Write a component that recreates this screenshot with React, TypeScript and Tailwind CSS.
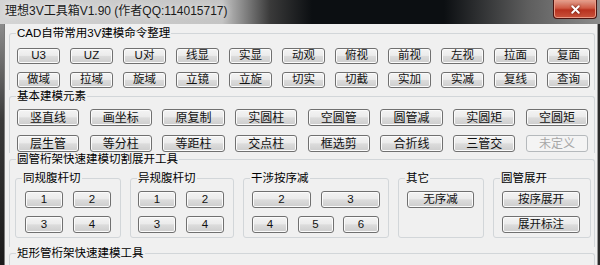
import type { ReactNode } from "react";
import { X } from "lucide-react";

type BtnProps = {
    label?: string;
    className?: string;
    disabled?: boolean;
};

function Btn({ label, className = "", disabled = false }: BtnProps) {
    return (
        <button
            className={`flex items-center justify-center rounded-[3px] border leading-none ${
                disabled
                    ? "border-[#b5b9bc] bg-[#f4f4f4] text-[#a7a7a7]"
                    : "border-[#707070] bg-[linear-gradient(#f4f4f4,#ebebeb_46%,#dcdcdc_52%,#cdcdcd)] text-[#111] shadow-[inset_0_0_0_1px_#fbfbfb]"
            } ${className}`}
        >
            {label}
        </button>
    );
}

type GroupProps = {
    title: string;
    className?: string;
    children: ReactNode;
};

function Group({ title, className = "", children }: GroupProps) {
    return (
        <fieldset className={`rounded-[3px] border border-[#d2d6d9] ${className}`}>
            <legend className="ml-[6px] px-[1px] text-[11.5px] leading-[12px] text-black">{title}</legend>
            {children}
        </fieldset>
    );
}

const cadRow1 = ["U3", "UZ", "U对", "线显", "实显", "动观", "俯视", "前视", "左视", "拉面", "复面"];
const cadRow2 = ["做域", "拉域", "旋域", "立镜", "立旋", "切实", "切截", "实加", "实减", "复线", "查询"];
const baseRow1 = ["竖直线", "画坐标", "原复制", "实圆柱", "空圆管", "圆管减", "实圆矩", "空圆矩"];
const baseRow2 = ["层生管", "等分柱", "等距柱", "交点柱", "框选剪", "合折线", "三管交"];

export default function App() {
    return (
        <div className="flex h-[265px] w-[600px] flex-col overflow-hidden bg-[#1c1c1c] font-['Liberation_Sans','Noto_Sans_CJK_SC',sans-serif]">
            {/* Title bar */}
            <div className="flex h-[24px] shrink-0 items-start justify-between bg-[linear-gradient(to_right,#d4d4d4_0%,#c4c4c4_37%,#3a3a3a_45%,#0c0f12_52%,#0c0f12_74%,#5e5e5e_88%,#8c8c8c_100%)]">
                <div className="pl-[5px] pt-[4px] text-[12px] leading-[14px] text-[#1a1a1a] [text-shadow:0_0_6px_#ffffff]">
                    理想3V工具箱V1.90 (作者QQ:114015717)
                </div>
                <div className="mr-[3px] flex h-[19px] w-[44px] items-center justify-center rounded-b-[4px] border border-t-0 border-[#4a1410] bg-[linear-gradient(#e3a391,#cf5a44_45%,#b8321f_55%,#c9533c)] shadow-[inset_0_0_0_1px_#e89a86]">
                    <X size={13} strokeWidth={3.5} className="text-white drop-shadow-[0_0_1px_#5a1a10]" />
                </div>
            </div>

            <div className="flex min-h-0 flex-1">
                {/* Left frame */}
                <div className="w-[4px] shrink-0 bg-[linear-gradient(#8c8c8c,#3a3a3a_40%,#1a1a1a)]" />

                {/* Client area */}
                <div className="flex min-w-0 flex-1 flex-col border-l border-[#7a7a7a] bg-[#f0f0f0] pr-[2px] pl-[4px]">
                    <Group title="CAD自带常用3V建模命令整理" className="mt-[3px] rounded-b-none border-b-0 pt-[9px] pb-[2px]">
                        <div className="ml-[7px] grid w-[573px] grid-cols-11 gap-x-[10px] gap-y-[8px] text-[11.5px]">
                            {cadRow1.map((t) => (
                                <Btn key={t} label={t} className="h-[16px]" />
                            ))}
                            {cadRow2.map((t) => (
                                <Btn key={t} label={t} className="h-[16px]" />
                            ))}
                        </div>
                    </Group>

                    <Group title="基本建模元素" className="rounded-b-none border-b-0 pt-[7px] pb-[1px]">
                        <div className="ml-[7px] grid w-[571px] grid-cols-8 gap-x-[10.5px] gap-y-[9px] text-[12px]">
                            {baseRow1.map((t) => (
                                <Btn key={t} label={t} className="h-[17px]" />
                            ))}
                            {baseRow2.map((t) => (
                                <Btn key={t} label={t} className="h-[17px]" />
                            ))}
                            <Btn label="未定义" disabled className="h-[17px]" />
                        </div>
                    </Group>

                    <Group title="圆管桁架快速建模切割展开工具" className="rounded-b-none border-b-0 pt-[7px] pb-[9px]">
                        <div className="ml-[5px] flex gap-[9px] text-[11.5px]">
                            <Group title="同规腹杆切" className="w-[106px] pt-[7px] pb-[4px]">
                                <div className="ml-[9px] grid grid-cols-[38px_38px] gap-x-[10px] gap-y-[8px]">
                                    <Btn label="1" className="h-[17px]" />
                                    <Btn label="2" className="h-[17px]" />
                                    <Btn label="3" className="h-[17px]" />
                                    <Btn label="4" className="h-[17px]" />
                                </div>
                            </Group>
                            <Group title="异规腹杆切" className="w-[104px] pt-[7px] pb-[4px]">
                                <div className="ml-[7px] grid grid-cols-[38px_38px] gap-x-[10px] gap-y-[8px]">
                                    <Btn label="1" className="h-[17px]" />
                                    <Btn label="2" className="h-[17px]" />
                                    <Btn label="3" className="h-[17px]" />
                                    <Btn label="4" className="h-[17px]" />
                                </div>
                            </Group>
                            <Group title="干涉按序减" className="w-[146px] pt-[7px] pb-[4px]">
                                <div className="ml-[8px] flex flex-col gap-y-[8px]">
                                    <div className="flex gap-x-[10px]">
                                        <Btn label="2" className="h-[17px] w-[59px]" />
                                        <Btn label="3" className="h-[17px] w-[59px]" />
                                    </div>
                                    <div className="flex gap-x-[9.5px]">
                                        <Btn label="4" className="h-[17px] w-[36px]" />
                                        <Btn label="5" className="h-[17px] w-[36px]" />
                                        <Btn label="6" className="h-[17px] w-[36px]" />
                                    </div>
                                </div>
                            </Group>
                            <Group title="其它" className="w-[86px] pt-[7px] pb-[4px]">
                                <div className="ml-[8px] flex flex-col gap-y-[8px]">
                                    <Btn label="无序减" className="h-[17px] w-[67px]" />
                                    <div className="h-[17px]" />
                                </div>
                            </Group>
                            <Group title="圆管展开" className="w-[98px] pt-[7px] pb-[4px]">
                                <div className="ml-[8px] flex flex-col gap-y-[8px]">
                                    <Btn label="按序展开" className="h-[17px] w-[78px]" />
                                    <Btn label="展开标注" className="h-[17px] w-[78px]" />
                                </div>
                            </Group>
                        </div>
                    </Group>

                    <Group title="矩形管桁架快速建模工具" className="rounded-b-none border-b-0 pt-[6px]">
                        <div className="ml-[7px] grid w-[556px] grid-cols-8 gap-x-[10px]">
                            {Array.from({ length: 8 }).map((_, i) => (
                                <Btn key={i} className="h-[18px]" />
                            ))}
                        </div>
                    </Group>
                </div>

                {/* Right frame */}
                <div className="w-[3px] shrink-0 border-l border-[#9a9a9a] bg-[#2a2a2a]" />
            </div>
        </div>
    );
}
